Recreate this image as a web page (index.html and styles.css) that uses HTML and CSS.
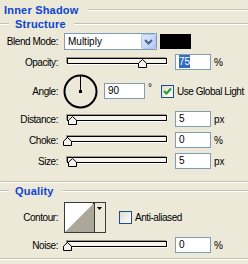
FILE: index.html
```html
<!DOCTYPE html>
<html lang="en">
<head>
    <meta charset="UTF-8">
    <title>Inner Shadow</title>
    <link rel="stylesheet" href="styles.css">
</head>
<body>
<div class="panel">

    <!-- Group header -->
    <div class="group-title first"><span>Inner Shadow</span></div>
    <div class="group-title sub"><span>Structure</span></div>

    <div class="row row-blend">
        <span class="lbl">Blend Mode:</span>
        <div class="select">
            <span class="select-text">Multiply</span>
            <span class="select-btn">
                <svg width="9" height="6" viewBox="0 0 9 6"><path d="M1 1 L4.5 4.5 L8 1" fill="none" stroke="#4d6185" stroke-width="2"/></svg>
            </span>
        </div>
        <div class="swatch"></div>
    </div>

    <div class="row row-opacity">
        <span class="lbl">Opacity:</span>
        <div class="slider">
            <div class="track"></div>
            <svg class="thumb" style="left:75px" width="9" height="9" viewBox="0 0 9 9"><path d="M0.5 8.5 V4.2 L4.5 0.5 L8.5 4.2 V8.5 Z" fill="#f4f3ee" stroke="#000"/></svg>
        </div>
        <div class="field"><span class="sel">75</span></div>
        <span class="unit">%</span>
    </div>

    <div class="row row-angle">
        <span class="lbl">Angle:</span>
        <svg class="dial" width="35" height="35" viewBox="0 0 35 35">
            <circle cx="17.5" cy="17.5" r="16" fill="none" stroke="#000" stroke-width="2"/>
            <line x1="17.5" y1="2" x2="17.5" y2="17" stroke="#000" stroke-width="1"/>
            <rect x="16" y="16" width="3" height="3" fill="#000"/>
        </svg>
        <div class="field wide">90</div>
        <span class="deg">&deg;</span>
        <span class="check checked">
            <svg width="11" height="11" viewBox="0 0 11 11"><path d="M2 5 L4.5 7.5 L9 2.5" fill="none" stroke="#21a121" stroke-width="2"/></svg>
        </span>
        <span class="check-text">Use Global Light</span>
    </div>

    <div class="row row-distance">
        <span class="lbl">Distance:</span>
        <div class="slider">
            <div class="track"></div>
            <svg class="thumb" style="left:5px" width="9" height="9" viewBox="0 0 9 9"><path d="M0.5 8.5 V4.2 L4.5 0.5 L8.5 4.2 V8.5 Z" fill="#f4f3ee" stroke="#000"/></svg>
        </div>
        <div class="field">5</div>
        <span class="unit">px</span>
    </div>

    <div class="row row-choke">
        <span class="lbl">Choke:</span>
        <div class="slider">
            <div class="track"></div>
            <svg class="thumb" style="left:0px" width="9" height="9" viewBox="0 0 9 9"><path d="M0.5 8.5 V4.2 L4.5 0.5 L8.5 4.2 V8.5 Z" fill="#f4f3ee" stroke="#000"/></svg>
        </div>
        <div class="field">0</div>
        <span class="unit">%</span>
    </div>

    <div class="row row-size">
        <span class="lbl">Size:</span>
        <div class="slider">
            <div class="track"></div>
            <svg class="thumb" style="left:5px" width="9" height="9" viewBox="0 0 9 9"><path d="M0.5 8.5 V4.2 L4.5 0.5 L8.5 4.2 V8.5 Z" fill="#f4f3ee" stroke="#000"/></svg>
        </div>
        <div class="field">5</div>
        <span class="unit">px</span>
    </div>

    <div class="sep"></div>

    <div class="group-title sub quality"><span>Quality</span></div>

    <div class="row row-contour">
        <span class="lbl">Contour:</span>
        <svg class="contour" width="42" height="31" viewBox="0 0 42 31">
            <rect x="0.5" y="0.5" width="41" height="30" fill="#ece9d8" stroke="#3a3a3a"/>
            <rect x="1" y="1" width="29" height="29" fill="#fff"/>
            <polygon points="1,30 30,1 30,30" fill="#aca899"/>
            <rect x="29" y="1" width="1" height="1" fill="#000"/>
            <line x1="30.5" y1="1" x2="30.5" y2="30" stroke="#3a3a3a"/>
            <polygon points="33,5 38,5 35.5,8" fill="#000"/>
        </svg>
        <span class="check"></span>
        <span class="check-text">Anti-aliased</span>
    </div>

    <div class="row row-noise">
        <span class="lbl">Noise:</span>
        <div class="slider">
            <div class="track"></div>
            <svg class="thumb" style="left:0px" width="9" height="9" viewBox="0 0 9 9"><path d="M0.5 8.5 V4.2 L4.5 0.5 L8.5 4.2 V8.5 Z" fill="#f4f3ee" stroke="#000"/></svg>
        </div>
        <div class="field">0</div>
        <span class="unit">%</span>
    </div>

    <div class="sep bottom"></div>
</div>
</body>
</html>
```

FILE: styles.css
```css
/* General */
body {
    margin: 0;
    padding: 0;
    background: #ece9d8;
    font-family: "Liberation Sans", Arial, sans-serif;
    font-size: 10px;
    color: #000;
}

.panel {
    width: 248px;
    height: 264px;
    overflow: hidden;
}

/* Group titles with etched lines */
.group-title {
    display: flex;
    align-items: center;
    height: 14px;
    font-size: 11px;
    font-weight: bold;
    letter-spacing: 0.2px;
    color: #0b44d4;
}

.group-title::after {
    content: "";
    flex: 1;
    height: 0;
    border-top: 1px solid #c4c1b1;
    border-bottom: 1px solid #fff;
    margin-left: 8px;
}

.group-title.first {
    margin-top: 3px;
    padding-left: 4px;
}

.group-title.sub::before {
    content: "";
    width: 9px;
    height: 0;
    border-top: 1px solid #c4c1b1;
    border-bottom: 1px solid #fff;
    margin-right: 6px;
}

.group-title.quality {
    margin-top: 1px;
}

.sep {
    margin-top: 12px;
    border-top: 1px solid #c4c1b1;
    border-bottom: 1px solid #fff;
}

.sep.bottom {
    margin-top: 5px;
}

/* Rows */
.row {
    display: flex;
    align-items: center;
    height: 16px;
}

.lbl {
    flex: none;
    width: 58px;
    text-align: right;
    letter-spacing: -0.45px;
}

.row-blend { margin-top: 2px; height: 17px; }
.row-opacity { margin-top: 4px; }
.row-angle { margin-top: 4px; height: 34px; }
.row-distance { margin-top: 3px; }
.row-choke { margin-top: 5px; }
.row-size { margin-top: 5px; }
.row-contour { margin-top: 4px; height: 31px; }
.row-noise { margin-top: 4px; }

/* Blend select */
.select {
    box-sizing: border-box;
    display: flex;
    align-items: center;
    width: 93px;
    height: 17px;
    margin-left: 6px;
    border: 1px solid #7f9db9;
    background: #fff;
}

.select-text {
    flex: 1;
    padding-left: 3px;
}

.select-btn {
    box-sizing: border-box;
    display: flex;
    align-items: center;
    justify-content: center;
    width: 15px;
    height: 15px;
    background: linear-gradient(135deg, #e1eafe, #b4c8f6);
    border: 1px solid #b2c5f0;
    border-radius: 2px;
}

.swatch {
    width: 31px;
    height: 15px;
    margin-left: 3px;
    background: #000;
}

/* Sliders */
.slider {
    position: relative;
    flex: none;
    width: 108px;
    height: 16px;
    margin-left: 5px;
}

.track {
    box-sizing: border-box;
    width: 100px;
    height: 6px;
    margin: 4px 0 0 4px;
    border: 1px solid #000;
    background: #f5f3ea;
    box-shadow: -1px -1px 0 #9d9a8c, 1px 1px 0 #fff;
}

.thumb {
    position: absolute;
    top: 5px;
}

/* Text fields */
.field {
    box-sizing: border-box;
    width: 36px;
    height: 16px;
    margin-left: 4px;
    padding-left: 3px;
    line-height: 14px;
    border: 1px solid #7f9db9;
    background: #fff;
}

.field.wide {
    width: 41px;
    margin-left: 6px;
}

.sel {
    background: #316ac5;
    color: #fff;
    padding: 1px 0;
}

.unit {
    margin-left: 3px;
}

/* Angle */
.dial {
    margin-left: 5px;
}

.deg {
    align-self: flex-start;
    width: 13px;
    margin-top: 8px;
    padding-left: 3px;
}

/* Checkboxes */
.check {
    box-sizing: border-box;
    display: flex;
    align-items: center;
    justify-content: center;
    width: 13px;
    height: 13px;
    border: 1px solid #1c5180;
    background: linear-gradient(135deg, #dcdcd7, #fff);
}

.check-text {
    margin-left: 3px;
    letter-spacing: -0.45px;
}

.contour {
    margin-left: 6px;
}

.row-contour .check {
    margin-left: 13px;
}
```
